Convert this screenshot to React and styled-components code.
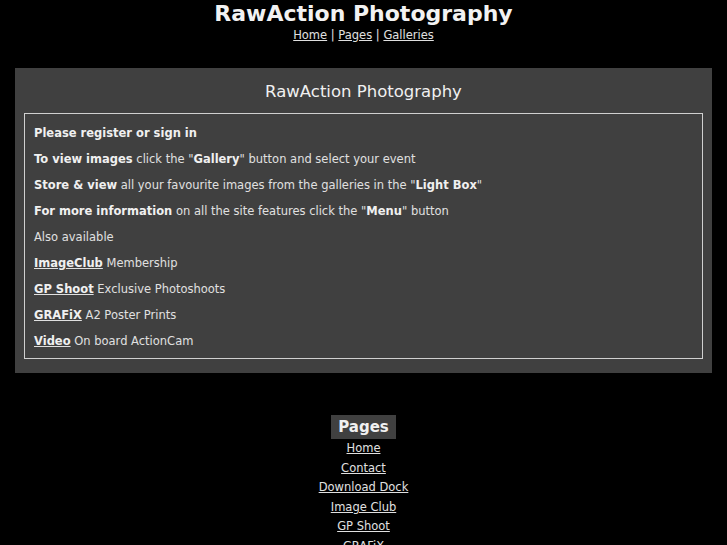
import { createGlobalStyle, styled } from "styled-components";

const GlobalStyle = createGlobalStyle`
  html, body {
    margin: 0;
    background: #000;
    color: #e0e0e0;
    font-family: "DejaVu Sans", Verdana, sans-serif;
  }
  a {
    color: #e0e0e0;
  }
`;

const features = [
  { label: "ImageClub", text: "Membership" },
  { label: "GP Shoot", text: "Exclusive Photoshoots" },
  { label: "GRAFiX", text: "A2 Poster Prints" },
  { label: "Video", text: "On board ActionCam" },
];

const pages = [
  "Home",
  "Contact",
  "Download Dock",
  "Image Club",
  "GP Shoot",
  "GRAFiX",
  "Video",
];

function App() {
  return (
    <>
      <GlobalStyle />
      <StyledHeader>
        <h1>RawAction Photography</h1>
        <StyledNav>
          <a href="#">Home</a> | <a href="#">Pages</a> |{" "}
          <a href="#">Galleries</a>
        </StyledNav>
      </StyledHeader>

      <StyledPanel>
        <h2>RawAction Photography</h2>
        <StyledInfoBox>
          <p>
            <b>Please register or sign in</b>
          </p>
          <p>
            <b>To view images</b> click the "<b>Gallery</b>" button and select
            your event
          </p>
          <p>
            <b>Store &amp; view</b> all your favourite images from the galleries
            in the "<b>Light Box</b>"
          </p>
          <p>
            <b>For more information</b> on all the site features click the "
            <b>Menu</b>" button
          </p>
          <p>Also available</p>
          {features.map((f) => (
            <p key={f.label}>
              <a href="#">
                <b>{f.label}</b>
              </a>{" "}
              {f.text}
            </p>
          ))}
        </StyledInfoBox>
      </StyledPanel>

      <StyledPages>
        <StyledPagesTitle>Pages</StyledPagesTitle>
        <ul>
          {pages.map((p) => (
            <li key={p}>
              <a href="#">{p}</a>
            </li>
          ))}
        </ul>
      </StyledPages>
    </>
  );
}

export default App;

const StyledHeader = styled.header`
  text-align: center;

  h1 {
    margin: 0;
    font-size: 22px;
    line-height: 28px;
    font-weight: bold;
    color: #f2f2f2;
  }
`;

const StyledNav = styled.nav`
  font-size: 11.5px;
  line-height: 14px;
`;

const StyledPanel = styled.section`
  margin: 26px 15px 0;
  background: #404040;
  padding: 9px 9px 14px;

  h2 {
    margin: 5px 0 12px;
    font-size: 16.5px;
    line-height: 19px;
    font-weight: normal;
    text-align: center;
    color: #f0f0f0;
  }
`;

const StyledInfoBox = styled.div`
  border: 1px solid #d0d0d0;
  padding: 2px 9px 0;
  font-size: 11.5px;
  line-height: 18px;

  p {
    margin: 8px 0;
  }

  b {
    color: #f0f0f0;
  }
`;

const StyledPages = styled.div`
  margin-top: 42px;
  display: flex;
  flex-direction: column;
  align-items: center;

  ul {
    list-style: none;
    margin: 0;
    padding: 0;
    text-align: center;
    font-size: 11.5px;
    line-height: 19.5px;
  }
`;

const StyledPagesTitle = styled.div`
  background: #404040;
  padding: 3px 7px;
  font-size: 15px;
  line-height: 18px;
  font-weight: bold;
  color: #f0f0f0;
`;
